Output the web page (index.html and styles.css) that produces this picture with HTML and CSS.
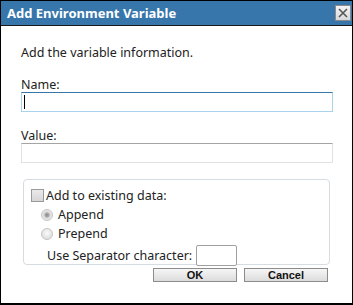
FILE: index.html
```html
<!DOCTYPE html>
<html lang="en">
<head>
  <meta charset="UTF-8" />
  <title>Add Environment Variable</title>
  <link rel="stylesheet" href="styles.css">
</head>
<body>

  <div class="dialog">
    <div class="titlebar">
      <span class="title">Add Environment Variable</span>
      <button class="close" title="Close">
        <svg width="10" height="10" viewBox="0 0 10 10"><path d="M1 1 L9 9 M9 1 L1 9" stroke="#555" stroke-width="1.6" fill="none"/></svg>
      </button>
    </div>

    <div class="content">
      <p class="intro">Add the variable information.</p>

      <label class="field-label" for="varName">Name:</label>
      <div class="field-wrap">
        <input type="text" id="varName" class="field focused" />
        <span class="caret"></span>
      </div>

      <label class="field-label" for="varValue">Value:</label>
      <input type="text" id="varValue" class="field" />

      <div class="group">
        <label class="row">
          <input type="checkbox" class="check" /> Add to existing data:
        </label>
        <label class="row sub">
          <input type="radio" name="mode" class="radio" checked /> Append
        </label>
        <label class="row sub">
          <input type="radio" name="mode" class="radio" /> Prepend
        </label>
        <div class="row sep">
          Use Separator character: <input type="text" class="sep-box" />
        </div>
      </div>

      <div class="actions">
        <button class="btn">OK</button>
        <button class="btn">Cancel</button>
      </div>
    </div>
  </div>

</body>
</html>
```

FILE: styles.css
```css
* {
  box-sizing: border-box;
  margin: 0;
  padding: 0;
}
body {
  font-family: 'Noto Sans', sans-serif;
  font-size: 12.5px;
  color: #222;
  background: #fff;
}
.dialog {
  width: 353px;
  height: 305px;
  border: 1px solid #000;
  border-bottom-width: 2px;
  background: #fff;
}
.titlebar {
  height: 25px;
  background: #3776ab;
  border-bottom: 1px solid #1a1a1a;
  display: flex;
  align-items: center;
  justify-content: space-between;
  padding: 0 1px 0 6px;
}
.title {
  color: #fff;
  font-weight: bold;
  font-size: 13px;
}
.close {
  width: 16px;
  height: 16px;
  border: 1px solid #8a8a8a;
  background: linear-gradient(#f4f4f4, #d8d8d8);
  display: flex;
  align-items: center;
  justify-content: center;
}
.content {
  padding: 19px 19px 0 20px;
}
.intro {
  line-height: 15px;
  margin-bottom: 17px;
}
.field-label {
  display: block;
  line-height: 15px;
}
.field-wrap {
  position: relative;
}
.field {
  display: block;
  width: 100%;
  height: 20px;
  border: 1px solid #e2e2e2;
  border-top-color: #a4a4a4;
  font: inherit;
  padding: 0 3px;
  margin-bottom: 16px;
  outline: none;
}
.field.focused {
  border-color: #a9d2ee;
  border-top-color: #3776ab;
}
.caret {
  position: absolute;
  left: 3px;
  top: 3px;
  width: 1px;
  height: 14px;
  background: #000;
}
.group {
  margin: 0 3px 0 2px;
  height: 86px;
  border: 1px solid #d6dce2;
  border-radius: 4px;
  padding: 6px 0 0 7px;
}
.row {
  display: flex;
  align-items: center;
  height: 19px;
}
.row.sub {
  padding-left: 10px;
}
.row.sep {
  padding-left: 16px;
  height: 24px;
}
.check {
  appearance: none;
  width: 13px;
  height: 13px;
  border: 1px solid #9a9a9a;
  background: linear-gradient(#eaeaea, #d6d6d6);
  margin-right: 2px;
}
.radio {
  appearance: none;
  width: 12px;
  height: 12px;
  border-radius: 50%;
  border: 1px solid #c4c4c4;
  background: radial-gradient(circle at 50% 40%, #fafafa, #d6d6d6);
  margin-right: 5px;
}
.radio:checked {
  background: radial-gradient(circle, #8c8c8c 0, #a8a8a8 2px, #d6d6d6 3px, #ececec 5px);
}
.sep-box {
  width: 41px;
  height: 21px;
  margin-left: 4px;
  border: 1px solid #a0a0a0;
  border-radius: 2px;
  outline: none;
}
.actions {
  display: flex;
  justify-content: flex-end;
  gap: 7px;
  margin: 3px 5px 0 0;
}
.btn {
  width: 84px;
  height: 14px;
  border: 1px solid #8c8c8c;
  background: linear-gradient(#f6f6f6, #dcdcdc);
  font-family: 'Liberation Sans', Arial, sans-serif;
  font-weight: bold;
  font-size: 11px;
  line-height: 12px;
  color: #111;
}
```
